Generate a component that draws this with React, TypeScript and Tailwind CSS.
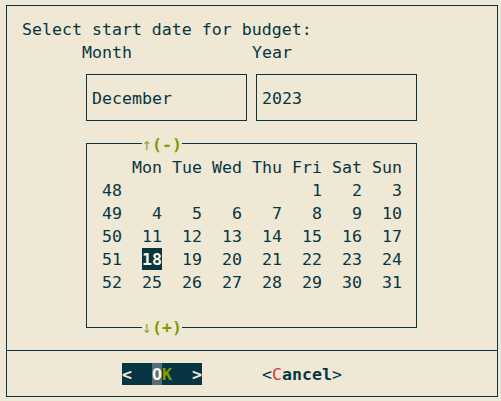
const weeks: { num: number; days: (number | null)[] }[] = [
  { num: 48, days: [null, null, null, null, 1, 2, 3] },
  { num: 49, days: [4, 5, 6, 7, 8, 9, 10] },
  { num: 50, days: [11, 12, 13, 14, 15, 16, 17] },
  { num: 51, days: [18, 19, 20, 21, 22, 23, 24] },
  { num: 52, days: [25, 26, 27, 28, 29, 30, 31] },
];

const weekdays = ['Mon', 'Tue', 'Wed', 'Thu', 'Fri', 'Sat', 'Sun'];

export default function App() {
  return (
    <div
      className="w-[501px] h-[401px] bg-[#eee8d5] text-[#073642] pt-[5px] pl-[6px] overflow-hidden text-[16.6px] leading-[23px] whitespace-pre"
      style={{ fontFamily: '"DejaVu Sans Mono", monospace' }}
    >
      <div className="w-[492px] h-[392px] border border-[#073642] flex flex-col">
        {/* Prompt */}
        <div className="h-[23px] mt-[11.5px] pl-[15px]">Select start date for budget:</div>

        {/* Labels */}
        <div className="h-[23px] flex pl-[75px]">
          <span className="w-[170px]">Month</span>
          <span>Year</span>
        </div>

        {/* Month / year fields */}
        <div className="flex mt-[10.5px] pl-[79px] gap-[9px]">
          <div className="w-[161px] h-[47px] border border-[#073642] pt-[11.5px] pl-[5px]">December</div>
          <div className="w-[161px] h-[47px] border border-[#073642] pt-[11.5px] pl-[5px]">2023</div>
        </div>

        {/* Calendar */}
        <div className="ml-[79px] mt-[22px] w-[331px] h-[185px] border border-[#073642] flex flex-col">
          <div className="h-[23px] -mt-[11.5px] pl-[55px] flex">
            <span className="bg-[#eee8d5] text-[#859900] w-[40px]">
              <span className="text-[#9aa83a]">↑</span>
              <span className="font-bold">(-)</span>
            </span>
          </div>
          <div className="pl-[15px]">
            <div className="h-[23px] flex">
              <span className="w-[20px]" />
              {weekdays.map((d) => (
                <span key={d} className="w-[40px] text-right">
                  {d}
                </span>
              ))}
            </div>
            {weeks.map((w) => (
              <div key={w.num} className="h-[23px] flex">
                <span className="w-[20px]">{w.num}</span>
                {w.days.map((d, i) => (
                  <span key={i} className="w-[40px] text-right">
                    {d === 18 ? (
                      <span className="inline-block h-[22px] leading-[23px] bg-[#073642] text-[#fdf6e3] font-bold">18</span>
                    ) : (
                      d ?? ''
                    )}
                  </span>
                ))}
              </div>
            ))}
          </div>
          <div className="mt-auto h-[23px] -mb-[11.5px] pl-[55px] flex">
            <span className="bg-[#eee8d5] text-[#859900] w-[40px]">
              <span className="text-[#9aa83a]">↓</span>
              <span className="font-bold">(+)</span>
            </span>
          </div>
        </div>

        {/* Separator */}
        <div className="mt-[22px] h-px bg-[#073642]" />

        {/* Buttons */}
        <div className="h-[23px] mt-[11.5px] flex pl-[115px]">
          <span className="w-[80px] h-[22px] bg-[#073642] text-[#eee8d5] font-bold flex">
            <span className="w-[30px]">{'<'}</span>
            <span className="bg-[#586e75] text-[#fdf6e3]">O</span>
            <span className="text-[#859900]">K</span>
            <span className="ml-auto">{'>'}</span>
          </span>
          <span className="ml-[60px]">
            {'<'}
            <span className="text-[#dc322f]">C</span>
            <span className="font-bold">ancel</span>
            {'>'}
          </span>
        </div>
      </div>
    </div>
  );
}
